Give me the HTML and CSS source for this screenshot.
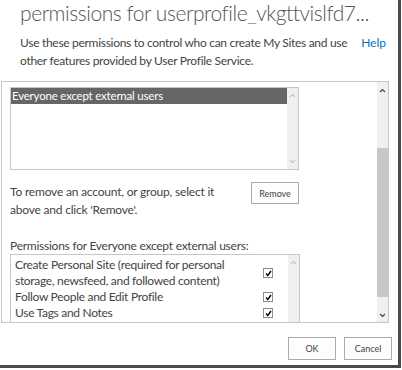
FILE: index.html
```html
<!DOCTYPE html>
<html lang="en">
<head>
    <meta charset="UTF-8">
    <title>Permissions</title>
    <link rel="stylesheet" href="styles.css">
</head>
<body>
    <div class="shot">
        <h1 class="title">permissions for userprofile_vkgttvislfd7...</h1>
        <div class="intro">
            <p class="desc">Use these permissions to control who can create My Sites and use other features provided by User Profile Service.</p>
            <a href="#" class="help">Help</a>
        </div>

        <div class="frame">
            <div class="frame-body">
                <div class="listbox">
                    <div class="list-items">
                        <div class="item selected">Everyone except external users</div>
                    </div>
                    <div class="vscroll">
                        <svg class="chev" width="7" height="5" viewBox="0 0 7 5"><polyline points="1,4 3.5,1.5 6,4" /></svg>
                        <svg class="chev" width="7" height="5" viewBox="0 0 7 5"><polyline points="1,1 3.5,3.5 6,1" /></svg>
                    </div>
                </div>

                <div class="remove-row">
                    <p class="remove-text">To remove an account, or group, select it above and click 'Remove'.</p>
                    <button class="btn btn-small">Remove</button>
                </div>

                <div class="perm-label">Permissions for Everyone except external users:</div>
                <div class="permbox">
                    <div class="perm-items">
                        <div class="perm">
                            <span class="perm-name">Create Personal Site (required for personal storage, newsfeed, and followed content)</span>
                            <span class="check"><svg width="7" height="7" viewBox="0 0 7 7"><polyline points="1,3.5 2.8,5.5 6,1" /></svg></span>
                        </div>
                        <div class="perm">
                            <span class="perm-name">Follow People and Edit Profile</span>
                            <span class="check"><svg width="7" height="7" viewBox="0 0 7 7"><polyline points="1,3.5 2.8,5.5 6,1" /></svg></span>
                        </div>
                        <div class="perm">
                            <span class="perm-name">Use Tags and Notes</span>
                            <span class="check"><svg width="7" height="7" viewBox="0 0 7 7"><polyline points="1,3.5 2.8,5.5 6,1" /></svg></span>
                        </div>
                    </div>
                    <div class="vscroll top-only">
                        <svg class="chev" width="7" height="5" viewBox="0 0 7 5"><polyline points="1,4 3.5,1.5 6,4" /></svg>
                    </div>
                </div>
            </div>
            <div class="outer-scroll">
                <div class="track-top">
                    <svg class="chev dark" width="7" height="5" viewBox="0 0 7 5"><polyline points="1,4 3.5,1.5 6,4" /></svg>
                </div>
                <div class="thumb"></div>
                <div class="track-bottom">
                    <svg class="chev dark" width="7" height="5" viewBox="0 0 7 5"><polyline points="1,1 3.5,3.5 6,1" /></svg>
                </div>
            </div>
        </div>

        <div class="button-container">
            <button class="btn">OK</button>
            <button class="btn">Cancel</button>
        </div>
    </div>
</body>
</html>
```

FILE: styles.css
```css
body {
    margin: 0;
    font-family: Lato, "Open Sans", sans-serif;
    background-color: #ffffff;
    color: #444;
}

.shot {
    width: 398px;
    height: 365px;
    border-right: 3px solid #4a4a4a;
    border-bottom: 3px solid #4a4a4a;
    overflow: hidden;
}

.title {
    margin: 0;
    padding: 0 0 0 20px;
    font-size: 21px;
    font-weight: 300;
    line-height: 26px;
    letter-spacing: -0.45px;
    color: #555;
    white-space: nowrap;
}

.intro {
    display: flex;
    align-items: flex-start;
    padding: 8px 12px 0 20px;
}

.desc {
    margin: 0;
    width: 336px;
    font-size: 12px;
    line-height: 18px;
    letter-spacing: -0.3px;
    color: #444;
}

.help {
    color: #0072c6;
    text-decoration: none;
    font-size: 12px;
    line-height: 18px;
    margin-left: 6px;
}

.frame {
    display: flex;
    margin: 11px 0 0 1px;
    width: 386px;
    height: 240px;
    border: 1px solid #c6c6c6;
    overflow: hidden;
}

.frame-body {
    flex: 1;
    padding: 5px 0 0 8px;
}

.listbox {
    display: flex;
    width: 287px;
    height: 81px;
    border: 1px solid #c6c6c6;
}

.list-items {
    flex: 1;
}

.item {
    font-size: 11.5px;
    line-height: 16px;
    letter-spacing: -0.2px;
    padding-left: 1px;
    color: #444;
}

.item.selected {
    background-color: #666666;
    color: #ffffff;
}

.vscroll {
    width: 11px;
    background-color: #f0f0f0;
    display: flex;
    flex-direction: column;
    justify-content: space-between;
    align-items: center;
    padding: 5px 0;
}

.chev {
    fill: none;
    stroke: #c4c4c4;
    stroke-width: 1.2;
}

.chev.dark {
    stroke: #444;
}

.remove-row {
    display: flex;
    justify-content: space-between;
    align-items: flex-start;
    width: 289px;
    margin-top: 12px;
}

.remove-text {
    margin: 1px 0 0 0;
    width: 220px;
    font-size: 12px;
    line-height: 18px;
    letter-spacing: -0.2px;
}

.btn {
    font-family: Lato, "Open Sans", sans-serif;
    font-size: 9px;
    color: #444;
    background-color: #fdfdfd;
    border: 1px solid #ababab;
    width: 48px;
    height: 23px;
    padding: 0;
    margin: 0;
}

.btn-small {
    height: 22px;
}

.perm-label {
    margin-top: 19px;
    font-size: 12px;
    line-height: 16px;
    letter-spacing: -0.25px;
}

.permbox {
    display: flex;
    width: 288px;
    height: 80px;
    border: 1px solid #c6c6c6;
    border-bottom: none;
}

.perm-items {
    flex: 1;
    padding: 2px 0 0 4px;
}

.perm {
    display: flex;
    align-items: center;
    font-size: 12px;
    line-height: 16px;
    letter-spacing: -0.3px;
    color: #444;
}

.perm-name {
    width: 248px;
}

.check {
    display: flex;
    align-items: center;
    justify-content: center;
    width: 8px;
    height: 8px;
    border: 1px solid #8a8a8a;
}

.check svg {
    fill: none;
    stroke: #111;
    stroke-width: 1.6;
}

.top-only {
    justify-content: flex-start;
}

.outer-scroll {
    width: 11px;
    background-color: #f0f0f0;
    display: flex;
    flex-direction: column;
}

.track-top {
    height: 66px;
    display: flex;
    justify-content: center;
    padding-top: 6px;
    box-sizing: border-box;
}

.thumb {
    height: 149px;
    background-color: #c8c8c8;
}

.track-bottom {
    flex: 1;
    display: flex;
    justify-content: center;
    align-items: flex-end;
    padding-bottom: 4px;
}

.button-container {
    display: flex;
    justify-content: flex-end;
    gap: 8px;
    padding: 14px 6px 0 0;
}
```
